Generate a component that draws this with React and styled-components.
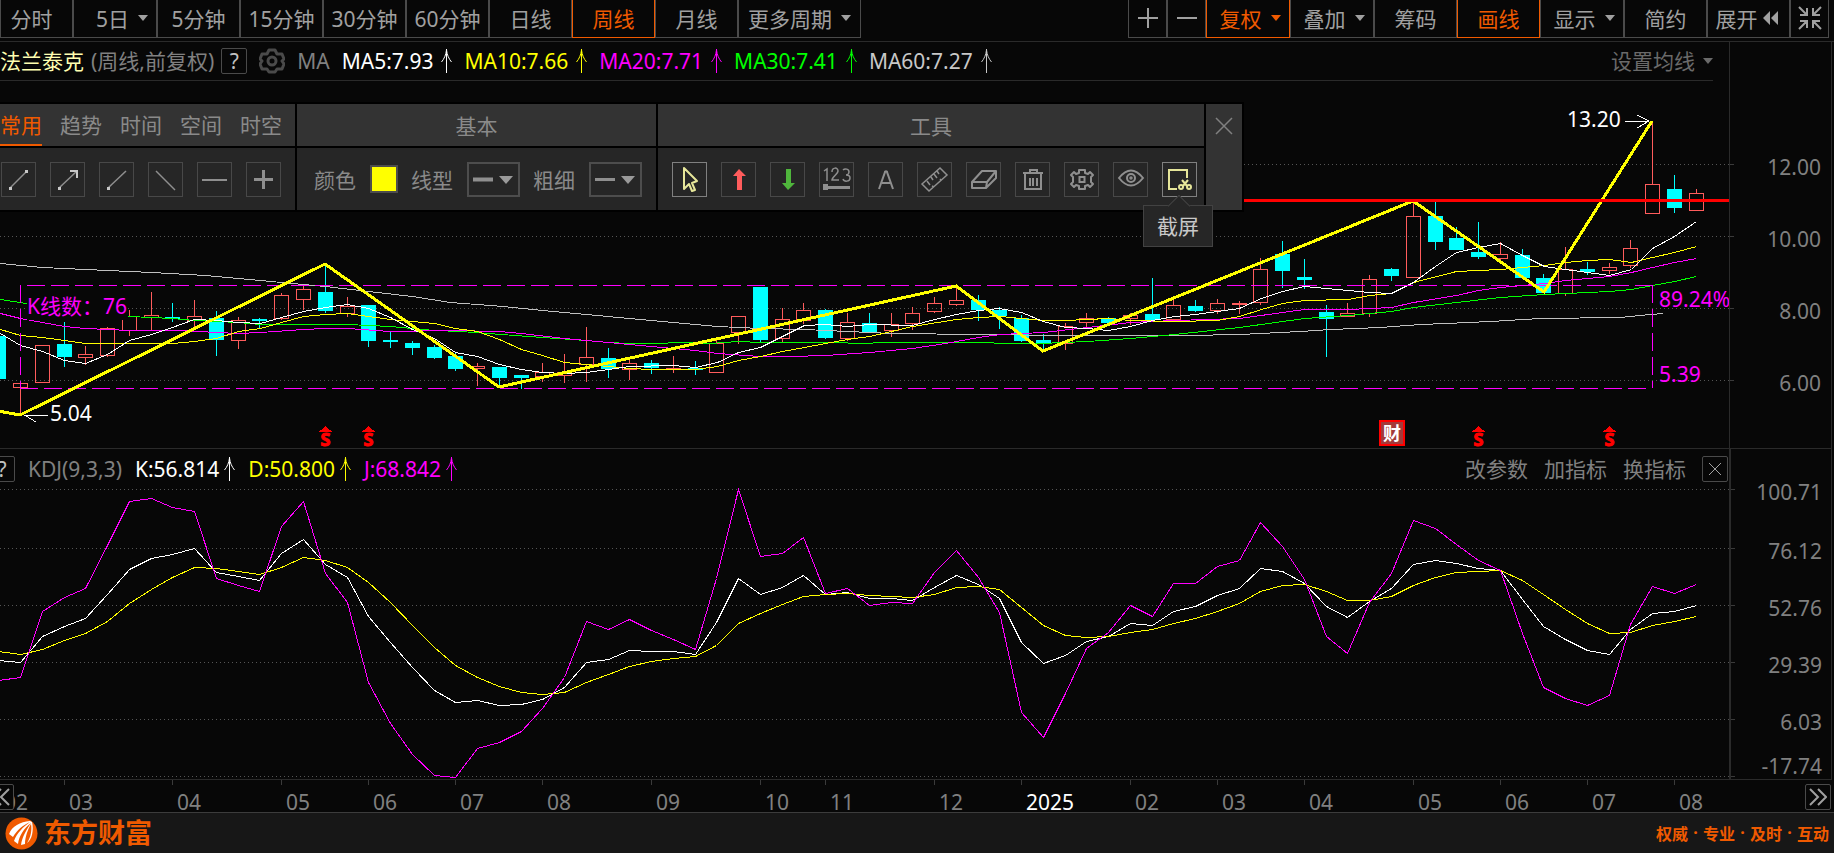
import React from "react";
import styled, { createGlobalStyle, css } from "styled-components";

const GlobalStyle = createGlobalStyle`
  :root {
    --bg: #070707;
    --line: #2a2a2a;
    --border: #4a4a4a;
    --orange: #f05a00;
    --grey: #808080;
    --up: #ff5c5c;
    --down: #00ffff;
    --magenta: #ff00ff;
    --yellow: #ffff00;
  }

  * {
    box-sizing: border-box;
  }

  body {
    margin: 0;
    overflow-x: hidden;
    background: var(--bg);
    color: #a0a0a0;
    font-family: "Noto Sans", "Noto Sans CJK SC", sans-serif;
    font-size: 21px;
  }

  button,
  input,
  select {
    padding: 0;
    margin: 0;
    border: 0;
    background: none;
    color: inherit;
    font: inherit;
    cursor: pointer;
  }
`;

/* ---------- data ---------- */

const BAR_STEP = 21.76;
const barX = (i) => Math.floor(20.6 + BAR_STEP * i) + 0.5;

// [rising, high, body top, body bottom, low], first bar sits left of the edge
const candles = [
  [0, 336, 336, 378, 378],
  [1, 382, 383, 387, 415],
  [1, 345, 345, 382, 382],
  [0, 322, 344, 356, 366],
  [1, 346, 354, 357, 364],
  [1, 327, 328, 355, 356],
  [1, 310, 316, 330, 335],
  [1, 292, 315, 317, 330],
  [0, 303, 317, 318, 321],
  [1, 300, 316, 320, 327],
  [0, 311, 318, 339, 355],
  [1, 317, 320, 340, 348],
  [0, 318, 319, 320, 328],
  [1, 293, 295, 318, 319],
  [1, 286, 289, 299, 309],
  [0, 265, 292, 310, 312],
  [1, 297, 306, 313, 316],
  [0, 305, 305, 340, 346],
  [0, 332, 340, 341, 347],
  [0, 341, 343, 347, 354],
  [0, 345, 347, 357, 358],
  [0, 353, 356, 368, 370],
  [1, 363, 366, 368, 385],
  [0, 367, 367, 377, 387],
  [0, 375, 375, 377, 388],
  [1, 363, 372, 376, 381],
  [1, 354, 372, 375, 382],
  [1, 327, 357, 364, 381],
  [0, 348, 358, 368, 377],
  [1, 360, 363, 369, 379],
  [0, 360, 363, 367, 373],
  [1, 356, 368, 369, 372],
  [0, 361, 368, 369, 374],
  [1, 340, 343, 372, 372],
  [1, 316, 316, 332, 343],
  [0, 287, 287, 339, 342],
  [1, 308, 319, 338, 341],
  [1, 303, 310, 320, 323],
  [0, 309, 310, 337, 338],
  [1, 313, 322, 338, 340],
  [0, 313, 323, 331, 331],
  [1, 313, 324, 330, 336],
  [1, 307, 313, 323, 329],
  [1, 297, 303, 311, 312],
  [1, 287, 300, 304, 305],
  [0, 295, 300, 309, 320],
  [0, 307, 310, 315, 328],
  [0, 315, 318, 340, 341],
  [0, 334, 340, 343, 350],
  [1, 323, 326, 343, 349],
  [1, 313, 318, 322, 326],
  [0, 317, 318, 322, 322],
  [1, 313, 315, 318, 324],
  [0, 278, 314, 319, 321],
  [1, 300, 305, 319, 320],
  [0, 300, 306, 310, 311],
  [1, 299, 303, 310, 313],
  [1, 301, 303, 304, 313],
  [1, 258, 269, 302, 304],
  [0, 241, 254, 270, 287],
  [0, 259, 277, 279, 288],
  [0, 305, 312, 318, 356],
  [1, 303, 313, 316, 316],
  [1, 275, 279, 313, 316],
  [0, 268, 269, 275, 280],
  [1, 202, 216, 277, 277],
  [0, 202, 216, 241, 249],
  [0, 227, 238, 249, 249],
  [0, 222, 252, 256, 258],
  [1, 242, 254, 258, 263],
  [0, 249, 255, 277, 277],
  [0, 274, 278, 292, 292],
  [1, 247, 269, 293, 295],
  [0, 262, 269, 271, 274],
  [1, 263, 267, 270, 273],
  [1, 240, 248, 265, 267],
  [1, 121, 184, 213, 213],
  [0, 175, 189, 207, 212],
  [1, 189, 193, 210, 210],
];

const averages = [
  {
    color: "#c0c0c0",
    points:
      "0,263 42,267 107,270 151,272 205,275 238,278 303,284 325,286 368,291 412,296 450,302 503,306 542,310 586,314 629,318 673,322 717,326 760,328 804,329 847,331 891,333 980,334 1060,335 1185,335 1240,334 1300,331 1330,329 1380,327 1420,324 1446,323 1490,321 1540,318 1620,317 1650,314 1663,313",
  },
  {
    color: "#00ff00",
    points:
      "0,299 26,303 129,316 172,318 194,320 238,322 260,324 347,324 390,326 434,330 460,331 542,337 586,340 608,342 629,343 655,343 680,342 710,343 738,341 760,342 834,342 860,343 885,342 945,342 1040,343 1087,341 1130,338 1174,334 1239,327 1304,318 1348,315 1391,311 1413,307 1456,302 1500,297 1544,294 1609,291 1631,289 1652,285 1674,281 1696,276",
  },
  {
    color: "#ff00ff",
    points:
      "0,313 20,318 42,322 64,326 85,328 129,330 180,330 216,332 238,333 260,332 303,329 325,328 347,328 390,331 450,330 499,331 521,333 564,338 586,340 608,342 629,344 651,346 695,350 717,353 760,356 790,356 825,355 869,352 912,348 945,343 978,337 1000,334 1043,332 1087,327 1130,322 1174,320 1239,318 1282,312 1304,309 1348,309 1391,307 1413,302 1456,295 1478,290 1500,287 1522,285 1544,283 1565,280 1587,278 1609,276 1631,272 1652,267 1674,262 1696,258",
  },
  {
    color: "#ffff00",
    points:
      "0,329 20,335 42,337 64,340 85,343 107,343 129,343 172,343 194,341 216,338 238,331 260,328 281,322 303,316 325,314 347,313 368,316 390,319 434,323 455,328 477,331 499,339 521,349 542,355 564,362 586,364 608,366 629,368 651,369 695,369 717,366 738,360 760,356 782,351 804,347 825,343 847,339 869,336 891,331 912,326 956,319 978,317 1000,316 1021,318 1043,320 1065,320 1108,318 1130,320 1174,321 1217,320 1239,316 1261,309 1282,303 1304,300 1348,299 1369,295 1391,293 1413,282 1456,271 1500,269 1522,267 1544,265 1565,262 1587,260 1609,259 1631,262 1652,257 1674,252 1696,246",
  },
  {
    color: "#ffffff",
    points:
      "0,333 20,345 42,351 64,360 85,363 107,354 129,340 151,334 172,327 194,319 216,320 238,322 260,323 281,317 303,311 325,307 347,304 368,308 390,317 412,329 434,338 455,352 477,356 499,364 521,369 542,372 564,373 586,372 608,369 629,366 673,365 695,367 717,362 738,352 760,347 782,336 804,325 825,324 847,326 869,324 912,325 934,319 956,314 978,310 999,308 1021,312 1043,321 1065,327 1087,328 1108,330 1130,326 1152,320 1174,316 1195,314 1217,311 1239,308 1261,298 1282,291 1304,286 1326,288 1348,290 1369,292 1391,293 1413,282 1435,266 1456,252 1478,247 1500,243 1522,255 1544,266 1565,269 1587,272 1609,275 1631,269 1652,248 1674,236 1696,221",
  },
];

const kdjLines = [
  {
    color: "#ffffff",
    values: [
      660, 662, 636, 626, 618, 594, 569, 558, 554, 548, 572, 576, 580, 553, 539,
      564, 577, 616, 642, 667, 690, 702, 700, 705, 704, 699, 687, 662, 659, 650,
      651, 651, 654, 622, 578, 594, 587, 575, 594, 592, 598, 598, 600, 587, 575,
      584, 598, 642, 663, 655, 641, 636, 623, 625, 611, 606, 595, 588, 568, 571,
      583, 606, 617, 601, 588, 564, 560, 563, 568, 570, 599, 626, 639, 650, 654,
      629, 613, 611, 605,
    ],
  },
  {
    color: "#ffff00",
    values: [
      651, 654, 649, 640, 633, 621, 603, 589, 577, 567, 568, 571, 574, 567, 557,
      560, 567, 582, 602, 625, 647, 665, 677, 686, 692, 694, 692, 682, 674, 666,
      661, 658, 656, 645, 623, 613, 604, 596, 594, 593, 595, 596, 597, 594, 587,
      586, 589, 607, 625, 635, 637, 636, 632, 629, 623, 618, 611, 603, 591, 585,
      584, 591, 600, 600, 596, 585, 577, 572, 571, 570, 580, 594, 609, 623, 633,
      632, 625, 621, 616,
    ],
  },
  {
    color: "#ff00ff",
    values: [
      680, 677, 611, 597, 588, 545, 501, 498, 507, 511, 578, 585, 591, 526, 501,
      573, 602, 682, 723, 754, 775, 777, 748, 742, 731, 708, 677, 621, 629, 619,
      630, 639, 649, 578, 489, 556, 553, 537, 593, 588, 605, 602, 603, 572, 550,
      577, 612, 712, 737, 693, 648, 632, 605, 616, 583, 583, 566, 560, 522, 546,
      579, 636, 653, 602, 573, 520, 528, 544, 560, 570, 633, 687, 698, 705, 695,
      624, 586, 593, 584,
    ],
  },
];

const zigzag = "-2,411 20,415 325,264 499,387 956,286 1043,351 1413,201 1544,292 1652,121";

const priceTicks = [
  { y: 164, text: "12.00" },
  { y: 236, text: "10.00" },
  { y: 308, text: "8.00" },
  { y: 380, text: "6.00" },
];

const kdjTicks = [
  { y: 489, label: 492, text: "100.71" },
  { y: 548, label: 551, text: "76.12" },
  { y: 605, label: 608, text: "52.76" },
  { y: 662, label: 665, text: "29.39" },
  { y: 719, label: 722, text: "6.03" },
  { y: 776, label: 766, text: "-17.74" },
];

const months = [
  [-1, "02"],
  [64, "03"],
  [172, "04"],
  [281, "05"],
  [368, "06"],
  [455, "07"],
  [542, "08"],
  [651, "09"],
  [760, "10"],
  [825, "11"],
  [934, "12"],
  [1021, "2025"],
  [1130, "02"],
  [1217, "03"],
  [1304, "04"],
  [1413, "05"],
  [1500, "06"],
  [1587, "07"],
  [1674, "08"],
];

const periods = [
  { text: "分时", width: 73, padding: "0 10px 2px 0" },
  { text: "5日", width: 84, caret: true, padding: "0 0 2px 14px" },
  { text: "5分钟", width: 83 },
  { text: "15分钟", width: 83 },
  { text: "30分钟", width: 83 },
  { text: "60分钟", width: 83 },
  { text: "日线", width: 83 },
  { text: "周线", width: 83, active: true },
  { text: "月线", width: 83 },
  { text: "更多周期", width: 123, caret: true },
];

const actions = [
  { text: "复权", width: 84, active: true, caret: true, padding: "0 0 2px 4px" },
  { text: "叠加", width: 84, caret: true, padding: "0 0 2px 4px" },
  { text: "筹码", width: 83 },
  { text: "画线", width: 83, active: true },
  { text: "显示", width: 84, caret: true, padding: "0 0 2px 4px" },
  { text: "简约", width: 83 },
];

const maValues = [
  { text: "MA5:7.93", color: "#ffffff" },
  { text: "MA10:7.66", color: "#ffff00" },
  { text: "MA20:7.71", color: "#ff00ff" },
  { text: "MA30:7.41", color: "#00ff00" },
  { text: "MA60:7.27", color: "#c8c8c8" },
];

const kdjValues = [
  { text: "K:56.814", color: "#ffffff" },
  { text: "D:50.800", color: "#ffff00" },
  { text: "J:68.842", color: "#ff00ff" },
];

/* ---------- shared parts ---------- */

const Caret = styled.span`
  width: 0;
  height: 0;
  border: 5px solid transparent;
  border-top: 6px solid currentColor;
  border-bottom: 0;
`;

const SmallButton = styled.button`
  display: flex;
  align-items: center;
  justify-content: center;
  width: 26px;
  height: 26px;
  border: 1px solid var(--border);
  border-radius: 2px;
  background: var(--bg);
  color: #c0c0c0;
  line-height: 24px;
`;

const Value = styled.span`
  display: flex;
  align-items: center;
  gap: ${(props) => props.$gap}px;
  color: ${(props) => props.$color};
  white-space: nowrap;
`;

const Arrow = () => (
  <svg width="11" height="24" viewBox="0 0 11 24" fill="none" stroke="currentColor">
    <path d="M5.5 0v24M5.5 1C5 6 3 10 .5 13M5.5 1C6 6 8 10 10.5 13" />
  </svg>
);

/* ---------- top bar ---------- */

const TopBar = styled.nav`
  display: flex;
  justify-content: space-between;
  height: 42px;
  padding-right: 5px;
  border-bottom: 1px solid var(--line);
`;

const Group = styled.div`
  display: flex;
  height: 38px;
`;

const Cell = styled.button`
  display: flex;
  flex: none;
  align-items: center;
  justify-content: center;
  gap: ${(props) => props.$gap || 9}px;
  width: ${(props) => props.$width}px;
  padding: ${(props) => props.$padding || "0 0 2px"};
  border: 1px solid var(--border);
  border-top: 0;
  white-space: nowrap;

  ${(props) =>
    props.$active &&
    css`
      border-color: var(--orange);
      color: var(--orange);
    `}
`;

const Cells = ({ items }) =>
  items.map((item) => (
    <Cell key={item.text} $width={item.width} $active={item.active} $padding={item.padding}>
      {item.text}
      {item.caret && <Caret />}
    </Cell>
  ));

/* ---------- panels ---------- */

const Page = styled.div`
  display: flex;
  flex-direction: column;
  min-height: 100vh;
  overflow: hidden;
`;

const Row = styled.div`
  display: grid;
  grid-template-columns: minmax(0, 1fr) 102px;
  margin-right: 2px;
  border-right: 1px solid var(--line);
  border-bottom: 1px solid var(--line);
`;

const Panel = styled.section`
  position: relative;
  min-width: 0;
`;

const AxisColumn = styled.div`
  position: relative;
  display: flex;
  align-items: flex-end;
  border-left: ${(props) => props.$line}px solid var(--line);
  background: var(--bg);
`;

const Plot = styled.svg`
  display: block;
  width: 100%;
  height: ${(props) => props.$height}px;
  overflow: visible;

  text {
    font-size: 21px;
  }
`;

const InfoRow = styled.header`
  display: flex;
  align-items: center;
  gap: 12px;
  height: 39px;
  margin-right: 16px;
  border-bottom: 1px solid var(--line);
  line-height: 26px;
`;

const StockName = styled.h1`
  margin: 0;
  color: #ffffb0;
  font-size: 21px;
  font-weight: 400;
`;

const Muted = styled.span`
  color: var(--grey);
  white-space: nowrap;
`;

const TextButton = styled.button`
  display: flex;
  align-items: center;
  gap: 8px;
  color: ${(props) => (props.$dim ? "#6a6a6a" : "var(--grey)")};
  white-space: nowrap;
`;

const Title = styled.div`
  display: flex;
  align-items: center;
  gap: 7px;
`;

const GearButton = styled.button`
  display: flex;
  color: #4a4a4a;
`;

const Push = styled.div`
  display: flex;
  align-items: center;
  gap: 16px;
  margin-left: auto;
`;

const KdjRow = styled.header`
  display: flex;
  align-items: center;
  gap: 13px;
  height: 36px;
  margin-left: -11px;
  padding: 4px 1px 0 0;
  line-height: 26px;
`;

/* ---------- drawing palette ---------- */

const Palette = styled.div`
  position: absolute;
  top: 60px;
  left: 0;
  z-index: 2;
  display: grid;
  grid-template-columns: 295px 359px 546px 36px;
  grid-template-rows: 42px 62px;
  gap: 2px;
  padding: 2px 2px 2px 0;
  background: #000;
  color: #8a8a8a;
`;

const PaletteHead = styled.div`
  display: flex;
  align-items: center;
  justify-content: ${(props) => (props.$tabs ? "flex-start" : "center")};
  gap: 18px;
  background: #333;
`;

const Tab = styled.button`
  height: 42px;
  border-bottom: 2px solid ${(props) => (props.$active ? "var(--orange)" : "transparent")};
  color: ${(props) => (props.$active ? "var(--orange)" : "inherit")};
`;

const PaletteBody = styled.div`
  display: flex;
  align-items: center;
  gap: ${(props) => props.$gap || 14}px;
  padding-left: ${(props) => props.$pad}px;
  background: #262626;
`;

const PaletteClose = styled.button`
  grid-column: 4;
  grid-row: 1 / span 2;
  display: flex;
  justify-content: center;
  padding-top: 13px;
  background: #333;
`;

const Tool = styled.button`
  position: relative;
  flex: none;
  width: 35px;
  height: 35px;
  border: 1px solid ${(props) => (props.$active ? "#808080" : "#484848")};
  color: #8f8f8f;

  svg {
    display: block;
  }
`;

const Field = styled.label`
  display: flex;
  align-items: center;
  gap: 14px;
  white-space: nowrap;
`;

const Swatch = styled.input`
  width: 28px;
  height: 28px;
  border: 2px solid #4d4d4d;
  appearance: none;

  &::-webkit-color-swatch-wrapper {
    padding: 0;
  }

  &::-webkit-color-swatch {
    border: 0;
    border-radius: 0;
  }
`;

const Picker = styled.span`
  display: grid;
  width: 53px;
  height: 35px;
  border: 2px solid #4d4d4d;

  select,
  svg {
    grid-area: 1 / 1;
    width: 100%;
    height: 100%;
  }

  select {
    appearance: none;
    color: transparent;
  }

  option {
    color: #000;
  }

  svg {
    pointer-events: none;
  }
`;

const Tooltip = styled.span`
  position: absolute;
  top: 42px;
  left: -20px;
  width: 70px;
  height: 42px;
  border: 1px solid #424242;
  background: #262626;
  color: #c8c8c8;
  line-height: 40px;
  text-align: center;

  &::before {
    content: "";
    position: absolute;
    top: -8px;
    left: 27px;
    width: 15px;
    height: 15px;
    border: 1px solid #424242;
    border-right: 0;
    border-bottom: 0;
    background: #262626;
    transform: rotate(45deg);
  }
`;

const ToolIcon = ({ children, color = "currentColor", width = 1.5 }) => (
  <svg width="33" height="33" viewBox="1 1 33 33" fill="none" stroke={color} strokeWidth={width}>
    {children}
  </svg>
);

const drawTools = [
  {
    name: "线段",
    icon: (
      <>
        <path d="M9 26 26 9" />
        <path d="M8 25h3v3H8zM24 8h3v3h-3z" fill="#c8c8c8" stroke="none" />
      </>
    ),
  },
  {
    name: "箭头",
    icon: (
      <>
        <path d="M9 26 27 9" />
        <path d="M20 9h7v7" stroke="#c8c8c8" strokeWidth="2" />
        <path d="M8 25h3v3H8z" fill="#c8c8c8" stroke="none" />
      </>
    ),
  },
  {
    name: "射线",
    icon: (
      <>
        <path d="M9 26 27 9" />
        <path d="M8 25h3v3H8z" fill="#c8c8c8" stroke="none" />
      </>
    ),
  },
  { name: "直线", icon: <path d="M8 9 27 28" /> },
  { name: "水平线", icon: <path d="M5 18h25" strokeWidth="2" /> },
  { name: "十字线", icon: <path d="M8 17.5h19M17.5 8v19" strokeWidth="3" /> },
];

const editTools = [
  {
    name: "选择",
    active: true,
    icon: (
      <path
        d="M12 6v21l5-5 3 7 3-1-3-7 5-2z"
        stroke="#e6e69a"
        strokeWidth="2"
        strokeLinejoin="round"
      />
    ),
  },
  { name: "向上箭头", icon: <path d="M18 7l-6 7h4v14h5V14h4z" fill="#ff5c5c" stroke="none" /> },
  { name: "向下箭头", icon: <path d="M18 28l-6-7h4V7h5v14h4z" fill="#4fb63c" stroke="none" /> },
  {
    name: "数字",
    icon: (
      <>
        <path d="M5 9l3-2v12M13 10c0-5 6-5 6-1 0 3-6 6-6 9h7M24 8c2-2 6-1 6 2 0 2-2 3-3 3 2 0 4 1 4 3 0 4-6 4-7 1" />
        <path d="M4 22h5v6H4z" fill="currentColor" stroke="none" />
        <path d="M9 25.500h22" strokeWidth="3" />
      </>
    ),
  },
  { name: "文字", icon: <path d="M11 27l6-17c0-1 2-1 2 0l6 17M14 21h8" strokeWidth="2" /> },
  {
    name: "测量",
    icon: (
      <path d="M5 22 23 6l7 7-18 16zM10 19l3 4M14 15l2 3M17 12l3 4M20 9l2 3M15 24l2 1M23 17l1 1" />
    ),
  },
  {
    name: "橡皮擦",
    icon: <path d="M6 20 16 9h14l-9 11zM6 20v6h14l1-6M20 26l10-10V9" strokeWidth="2" strokeLinejoin="round" />,
  },
  {
    name: "删除",
    icon: <path d="M8 11h20M15 10V8h7v2M10 12v15h16V12M15 16v8M18 16v8M22 16v8" strokeWidth="2" />,
  },
  {
    name: "设置",
    icon: (
      <>
        <path
          d="M15 11V8h6v3l3 1 2-2 3 3-2 2v5l2 2-3 3-2-2-3 1v3h-6v-3l-3-1-2 2-3-3 2-2v-5l-2-2 3-3 2 2z"
          strokeLinejoin="round"
          strokeWidth="2"
        />
        <path d="M15.500 15h5v5h-5z" strokeWidth="2" />
      </>
    ),
  },
  {
    name: "显示",
    icon: (
      <>
        <path d="M6 16q12-15 24 0-12 15-24 0z" strokeWidth="2" />
        <circle cx="18" cy="16" r="4" strokeWidth="2" />
        <circle cx="18" cy="16" r="1" />
      </>
    ),
  },
  {
    name: "截屏",
    active: true,
    tip: true,
    icon: (
      <g stroke="#e6e69a" strokeWidth="2">
        <path d="M15 27H7V8h18v8" />
        <path d="M20 18l5 6M26 18l-5 6" />
        <circle cx="19" cy="25" r="2" />
        <circle cx="27" cy="25" r="2" />
      </g>
    ),
  },
];

const Tools = ({ items }) =>
  items.map((tool) => (
    <Tool key={tool.name} $active={tool.active} aria-label={tool.name}>
      {tool.tip && <Tooltip>{tool.name}</Tooltip>}
      <ToolIcon>{tool.icon}</ToolIcon>
    </Tool>
  ));

const LinePicker = ({ thin, children }) => (
  <Picker>
    <select>{children}</select>
    <svg viewBox="0 0 49 31">
      <path d="M4 15.500h20" stroke="#8f8f8f" strokeWidth={thin ? 3 : 4} />
      <path d="M30 12h14l-7 8z" fill="#9a9a9a" />
    </svg>
  </Picker>
);

const DrawingPalette = () => (
  <Palette>
    <PaletteHead $tabs>
      <Tab $active>常用</Tab>
      <Tab>趋势</Tab>
      <Tab>时间</Tab>
      <Tab>空间</Tab>
      <Tab>时空</Tab>
    </PaletteHead>
    <PaletteHead>基本</PaletteHead>
    <PaletteHead>工具</PaletteHead>
    <PaletteClose aria-label="关闭">
      <svg width="18" height="18" viewBox="0 0 18 18" stroke="#808080" strokeWidth="1.5">
        <path d="M1 1l16 16M17 1 1 17" />
      </svg>
    </PaletteClose>
    <PaletteBody $pad={1}>
      <Tools items={drawTools} />
    </PaletteBody>
    <PaletteBody $pad={17} $gap={13}>
      <Field>
        颜色
        <Swatch type="color" defaultValue="#ffff00" />
      </Field>
      <Field>
        线型
        <LinePicker>
          <option>实线</option>
          <option>虚线</option>
        </LinePicker>
      </Field>
      <Field>
        粗细
        <LinePicker thin>
          <option>细</option>
          <option>粗</option>
        </LinePicker>
      </Field>
    </PaletteBody>
    <PaletteBody $pad={14}>
      <Tools items={editTools} />
    </PaletteBody>
  </Palette>
);

/* ---------- charts ---------- */

const GridLine = ({ y }) => (
  <line x1="0" x2="100%" y1={y + 0.5} y2={y + 0.5} stroke="#555" strokeDasharray="1 3" />
);

const Candle = ({ index, data: [rising, high, top, bottom, low] }) => {
  const x = barX(index);
  const color = rising ? "var(--up)" : "var(--down)";
  return (
    <g stroke={color} fill={rising ? "none" : color}>
      <path d={`M${x} ${high}V${top}M${x} ${bottom}V${low + 1}`} />
      <rect x={x - 7} y={top + 0.5} width="14" height={bottom - top} />
    </g>
  );
};

const Mark = styled.text`
  && {
    font-size: 18px;
  }
  font-weight: 700;
  text-anchor: middle;
`;

const Signal = ({ x }) => (
  <g fill="#ff0000" stroke="#ff0000">
    <path d={`M${x - 5} 431l5-4 5 4z`} />
    <Mark x={x} y="446">
      S
    </Mark>
  </g>
);

const PriceChart = () => (
  <Plot $height={367} shapeRendering="crispEdges">
    <g transform="translate(0 -81)" fill="none">
      {priceTicks.map((tick) => (
        <GridLine key={tick.y} y={tick.y} />
      ))}
      {candles.map((data, i) => (
        <Candle key={i} index={i - 1} data={data} />
      ))}
      {averages.map((line) => (
        <polyline
          key={line.color}
          points={line.points}
          stroke={line.color}
          transform="translate(.5 .5)"
        />
      ))}
      <g stroke="var(--magenta)" strokeDasharray="18 6">
        <path d="M27 285.500H1652M20 388.500H1652M20.500 285V388M1652.500 285V388" />
      </g>
      <polyline points={zigzag} stroke="var(--yellow)" strokeWidth="3" />
      <line x1="1244" x2="100%" y1="200.500" y2="200.500" stroke="#ff0000" strokeWidth="3" />
      <rect x="27" y="293" width="101" height="27" fill="var(--bg)" />
      <g fill="var(--magenta)">
        <text x="27" y="314">
          K线数：76
        </text>
        <text x="1659" y="307">
          89.24%
        </text>
        <text x="1659" y="382">
          5.39
        </text>
      </g>
      <g fill="#fff">
        <text x="50" y="421">
          5.04
        </text>
        <text x="1567" y="127">
          13.20
        </text>
      </g>
      <g stroke="#fff">
        <path d="M24 415.500H48M26 416l10 6" />
        <path d="M1625 121.500H1649M1637 115l12 6-12 7" />
      </g>
      {[325, 368, 1478, 1609].map((x) => (
        <Signal key={x} x={x + 0.5} />
      ))}
      <rect x="1380" y="421" width="24" height="24" fill="#a33a3a" stroke="#ff0000" strokeWidth="2" />
      <Mark x="1392" y="440" fill="#fff">
        财
      </Mark>
    </g>
  </Plot>
);

const KdjChart = () => (
  <Plot $height={294} shapeRendering="crispEdges">
    <g transform="translate(0 -485)" fill="none">
      {kdjTicks.map((tick) => (
        <GridLine key={tick.y} y={tick.y} />
      ))}
      {kdjLines.map((line) => (
        <polyline
          key={line.color}
          stroke={line.color}
          points={line.values.map((y, i) => `${barX(i - 1)},${y + 0.5}`).join(" ")}
        />
      ))}
    </g>
  </Plot>
);

const Axis = ({ top, height, ticks }) => (
  <Plot $height={height}>
    <g transform={`translate(0 ${-top})`} fill="var(--grey)">
      {ticks.map((tick) => (
        <g key={tick.y}>
          <path d={`M0 ${tick.y + 0.5}h4`} stroke="#3a3a3a" />
          <text x="91" y={(tick.label || tick.y + 3) + 8} textAnchor="end">
            {tick.text}
          </text>
        </g>
      ))}
    </g>
  </Plot>
);

/* ---------- time axis and footer ---------- */

const TimeAxis = styled.div`
  position: relative;
  border-bottom: 1px solid #3c3c3c;
`;

const Scroll = styled(SmallButton)`
  position: absolute;
  top: 4px;
  ${(props) => (props.$left ? "left: -12px;" : "right: 3px;")}
`;

const Footer = styled.footer`
  display: flex;
  flex: 1;
  align-items: center;
  justify-content: space-between;
  min-height: 40px;
  padding: 0 5px;
  background: #171717;
  color: var(--orange);
`;

const Brand = styled.a`
  display: flex;
  align-items: center;
  gap: 6px;
  color: inherit;
  font-size: 27px;
  font-weight: 700;
  line-height: 32px;
  text-decoration: none;
`;

const Motto = styled.p`
  display: flex;
  margin: 0;
  font-size: 16px;
  font-weight: 700;

  span {
    width: 15px;
    text-align: center;
  }
`;

const Chevrons = ({ left }) => (
  <svg width="18" height="18" viewBox="0 0 18 18" fill="none" stroke="#a0a0a0" strokeWidth="2">
    <path d={left ? "M9 1 1 9l8 8M17 1 9 9l8 8" : "M1 1l8 8-8 8M9 1l8 8-8 8"} />
  </svg>
);

const App = () => {
  return (
    <Page>
      <GlobalStyle />
      <TopBar>
        <Group>
          <Cells items={periods} />
        </Group>
        <Group>
          <Cell $width={39} aria-label="放大">
            <svg width="20" height="20" stroke="#a0a0a0" strokeWidth="2">
              <path d="M0 10h20M10 0v20" />
            </svg>
          </Cell>
          <Cell $width={39} aria-label="缩小">
            <svg width="20" height="20" stroke="#a0a0a0" strokeWidth="2">
              <path d="M0 10h20" />
            </svg>
          </Cell>
          <Cells items={actions} />
          <Cell $width={83} $gap={5} $padding="0 4px 2px 0">
            展开
            <svg width="15" height="14" fill="#a0a0a0">
              <path d="M7 0v14L0 7zM15 0v14L8 7z" />
            </svg>
          </Cell>
          <Cell $width={39} aria-label="退出全屏">
            <svg width="24" height="24" fill="none" stroke="#a0a0a0" strokeWidth="2">
              <path d="M1 1l8 8M2 9h7V2M23 1l-8 8M22 9h-7V2M1 23l8-8M2 15h7v7M23 23l-8-8M22 15h-7v7" />
            </svg>
          </Cell>
        </Group>
      </TopBar>

      <Row>
        <Panel>
          <InfoRow>
            <Title>
              <StockName>法兰泰克</StockName>
              <Muted>(周线,前复权)</Muted>
              <SmallButton>?</SmallButton>
            </Title>
            <GearButton aria-label="指标设置">
              <svg width="26" height="26" viewBox="0 0 26 26" fill="none" stroke="currentColor" strokeWidth="3">
                <path
                  d="M10 2h6l2 4 5 0 2 5-2 2 2 3-2 5-5 0-2 3h-6l-2-3-5 0-2-5 2-3-2-2 2-5 5 0z"
                  strokeLinejoin="round"
                />
                <circle cx="13" cy="13" r="4" />
              </svg>
            </GearButton>
            <Muted>MA</Muted>
            {maValues.map((item) => (
              <Value key={item.text} $color={item.color} $gap={8}>
                {item.text}
                <Arrow />
              </Value>
            ))}
            <Push>
              <TextButton $dim>
                设置均线
                <Caret />
              </TextButton>
            </Push>
          </InfoRow>
          <PriceChart />
          <DrawingPalette />
        </Panel>
        <AxisColumn $line={1}>
          <Axis top={81} height={367} ticks={priceTicks} />
        </AxisColumn>
      </Row>

      <Row>
        <Panel>
          <KdjRow>
            <SmallButton>?</SmallButton>
            <Muted>KDJ(9,3,3)</Muted>
            {kdjValues.map((item) => (
              <Value key={item.text} $color={item.color} $gap={5}>
                {item.text}
                <Arrow />
              </Value>
            ))}
            <Push>
              <TextButton>改参数</TextButton>
              <TextButton>加指标</TextButton>
              <TextButton>换指标</TextButton>
              <SmallButton aria-label="关闭指标">
                <svg width="12" height="12" stroke="#a0a0a0">
                  <path d="M0 0l12 12M12 0 0 12" />
                </svg>
              </SmallButton>
            </Push>
          </KdjRow>
          <KdjChart />
        </Panel>
        <AxisColumn $line={2}>
          <Axis top={485} height={294} ticks={kdjTicks} />
        </AxisColumn>
      </Row>

      <TimeAxis>
        <Plot $height={32}>
          {months.map(([x, text]) => (
            <g key={x}>
              <path d={`M${x + 0.5} 0v5`} stroke="#3a3a3a" />
              <text x={x + 5} y="30" fill={text === "2025" ? "#fff" : "var(--grey)"}>
                {text}
              </text>
            </g>
          ))}
        </Plot>
        <Scroll $left aria-label="更早">
          <Chevrons left />
        </Scroll>
        <Scroll aria-label="更新">
          <Chevrons />
        </Scroll>
      </TimeAxis>

      <Footer>
        <Brand href="#">
          <svg width="33" height="33" viewBox="0 0 33 33">
            <circle cx="16.500" cy="16.500" r="16" fill="var(--orange)" />
            <path
              d="M25 4C15 5 7 9 4 17l4 3C12 13 18 8 25 5 18 10 12 16 9 24l4 3C14 19 19 11 26 6 22 12 17 20 16 28l4-1C20 20 23 12 26 7c1 6 0 13-4 19 5-3 7-13 5-21z"
              fill="#fff"
            />
          </svg>
          东方财富
        </Brand>
        <Motto>
          权威<span>·</span>专业<span>·</span>及时<span>·</span>互动
        </Motto>
      </Footer>
    </Page>
  );
};

export default App;
